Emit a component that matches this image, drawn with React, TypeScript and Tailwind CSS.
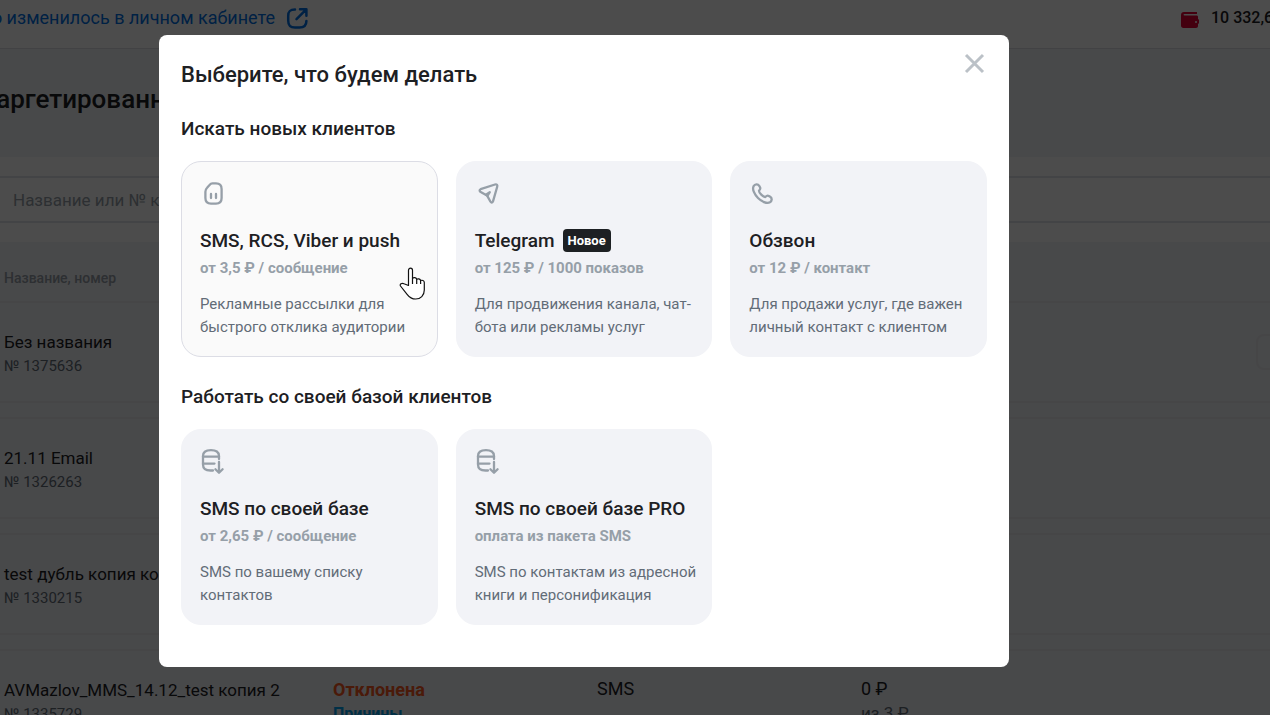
import type { ReactNode } from "react";

type Option = {
  icon: ReactNode;
  title: string;
  price: string;
  text: string;
  isNew?: boolean;
  active?: boolean;
};

type Campaign = {
  name: string;
  number: string;
  status?: string;
  channel?: string;
  spent?: string;
  budget?: string;
  menu?: boolean;
};

function CardIcon({ children }: { children: ReactNode }) {
  return (
    <svg
      width="27"
      height="27"
      viewBox="0 0 27 27"
      fill="none"
      stroke="#969fa8"
      strokeWidth="2.3"
      strokeLinecap="round"
      strokeLinejoin="round"
      aria-hidden="true"
    >
      {children}
    </svg>
  );
}

function SimIcon() {
  return (
    <CardIcon>
      <path d="M12.4 3.4h3.6c4 0 5.6 1.6 5.6 5.6v9c0 4-1.6 5.6-5.6 5.6h-5c-4 0-5.6-1.6-5.6-5.6v-6.2c0-1.8.5-2.9 1.7-4.1l2.2-2.4c1-1.2 1.7-1.9 3.1-1.9z" />
      <path d="M11 14v4M16 14v4" />
    </CardIcon>
  );
}

function TelegramIcon() {
  return (
    <CardIcon>
      <path d="M5.6 9.2 20 4.5c1.8-.5 2.7.4 2.2 2.2L18 21.4c-.5 1.4-1.7 1.5-2.5.3L12 15.4l-6.300-3.300c-1.400-.9-1.400-2.300-.1-2.900z" />
      <path d="m11 14.800 3.800-2.700-2.300 3.600z" />
    </CardIcon>
  );
}

function PhoneIcon() {
  return (
    <CardIcon>
      <path d="M4.6 6.2C6 3.9 8.9 3.7 10.2 5.8l.8 1.400c.8 1.400.1 2.400-1 3.500C9.800 12.700 14.200 17.200 16.300 17c1.100-1.100 2.100-1.800 3.500-1l1.400.8c2.100 1.400 1.900 4.200-.3 5.500C17.800 24 12.500 21.500 9 18 5.500 14.500 3 9.200 4.600 6.200Z" />
    </CardIcon>
  );
}

function BaseIcon() {
  return (
    <CardIcon>
      <path d="M19 11V8c0-4-3-5.900-8-5.900S3 4 3 8v8.500c0 4.200 2.500 6 7.500 6H13" />
      <path d="M3 8.700h16M3 15.600h11.500" />
      <path d="M19 14v10.500M15.400 21.200l3.600 3.600 3.600-3.600" />
    </CardIcon>
  );
}

function HandCursor() {
  return (
    <svg
      className="pointer-events-none absolute top-[105px] right-[11px]"
      width="27"
      height="33"
      viewBox="0 0 27 33"
      fill="#fff"
      stroke="#111"
      strokeWidth="1.2"
      strokeLinejoin="round"
      aria-hidden="true"
    >
      <path d="M9.500 18.500V3.200c0-2.800 4-2.800 4 0v8.300c1-1.500 4-1.200 4.200.9 1-1.100 3.600-.7 3.900 1.200 1.300-.8 3.700-.2 3.700 2V23c0 5.500-3.800 9-8.600 9-4.200 0-6.400-1.800-8.600-4.700L1.500 19c-1.200-2 1.500-3.500 3.500-2.200z" />
      <path d="M13.500 11.500V17M17.700 12.500V17M21.600 13.600V17" fill="none" />
    </svg>
  );
}

const searchOptions: Option[] = [
  {
    icon: <SimIcon />,
    title: "SMS, RCS, Viber и push",
    price: "от 3,5 ₽ / сообщение",
    text: "Рекламные рассылки для быстрого отклика аудитории",
    active: true,
  },
  {
    icon: <TelegramIcon />,
    title: "Telegram",
    price: "от 125 ₽ / 1000 показов",
    text: "Для продвижения канала, чат-бота или рекламы услуг",
    isNew: true,
  },
  {
    icon: <PhoneIcon />,
    title: "Обзвон",
    price: "от 12 ₽ / контакт",
    text: "Для продажи услуг, где важен личный контакт с клиентом",
  },
];

const baseOptions: Option[] = [
  {
    icon: <BaseIcon />,
    title: "SMS по своей базе",
    price: "от 2,65 ₽ / сообщение",
    text: "SMS по вашему списку контактов",
  },
  {
    icon: <BaseIcon />,
    title: "SMS по своей базе PRO",
    price: "оплата из пакета SMS",
    text: "SMS по контактам из адресной книги и персонификация",
  },
];

const campaigns: Campaign[] = [
  { name: "Без названия", number: "№ 1375636", menu: true },
  { name: "21.11 Email", number: "№ 1326263" },
  { name: "test дубль копия копия", number: "№ 1330215" },
  {
    name: "AVMazlov_MMS_14.12_test копия 2",
    number: "№ 1335729",
    status: "Отклонена",
    channel: "SMS",
    spent: "0 ₽",
    budget: "из 3 ₽",
  },
];

function OptionCard({ option }: { option: Option }) {
  return (
    <button
      type="button"
      className={
        option.active
          ? "relative flex flex-col items-start rounded-[20px] border border-[#dcdde5] bg-[#fafafa] pt-[18px] pr-3 pb-[17px] pl-[18px] text-left"
          : "relative flex flex-col items-start rounded-[20px] border border-[#f2f3f7] bg-[#f2f3f7] pt-[18px] pr-3 pb-[17px] pl-[18px] text-left"
      }
    >
      {option.icon}
      <span className="mt-5 flex items-center gap-2 text-[19px] leading-[27px] font-medium whitespace-nowrap text-[#1d2023]">
        {option.title}
        {option.isNew && (
          <span className="rounded bg-[#1d2023] px-[5px] text-[13px] leading-[23px] font-bold text-white">
            Новое
          </span>
        )}
      </span>
      <span className="mt-0.5 text-[15px] leading-6 font-bold whitespace-nowrap text-[#969fa8]">
        {option.price}
      </span>
      <span className="mt-[13px] text-[15px] leading-[23px] text-[#626c77]">
        {option.text}
      </span>
      {option.active && <HandCursor />}
    </button>
  );
}

function OptionGroup({ title, options }: { title: string; options: Option[] }) {
  return (
    <section>
      <h3 className="text-[19px] leading-7 font-medium text-[#1d2023]">
        {title}
      </h3>
      <div className="mt-[18px] grid grid-cols-3 gap-[18px]">
        {options.map((option) => (
          <OptionCard key={option.title} option={option} />
        ))}
      </div>
    </section>
  );
}

function TopBar() {
  return (
    <header className="flex h-[49px] items-start justify-between border-b border-[#dcdde5] bg-white">
      <a href="#news" className="flex pt-1 text-[#0070e5]">
        <span className="flex w-[275px] justify-end text-lg leading-7 whitespace-nowrap">
          Что изменилось в личном кабинете
        </span>
        <svg
          className="mt-[3px] ml-[11px]"
          width="23"
          height="23"
          viewBox="0 0 23 23"
          fill="none"
          stroke="currentColor"
          strokeWidth="2.5"
          strokeLinecap="round"
          strokeLinejoin="round"
          aria-hidden="true"
        >
          <path d="M9 2.500C4 2.500 2.200 4 2.200 9v4.500c0 5 1.800 7 6.800 7h4.500c5 0 6.900-2 6.900-6.500M14 2.300h6.400v6.400M20 2.700 10.500 12.200" />
        </svg>
      </a>
      <div className="flex w-[90px] shrink-0 items-center gap-3 overflow-hidden pt-1">
        <svg width="19" height="19" viewBox="0 0 19 19" className="mt-1 shrink-0" aria-hidden="true">
          <path
            fill="#e50033"
            d="M4 1h13v2H4.500c-1.300 0-1.300 1.500 0 1.500H16.500c1 0 1.500.5 1.500 1.500v2c.6.2 1 .6 1 1.300v2.400c0 .7-.4 1.100-1 1.300v2c0 1.200-.8 2-2 2H3.500c-1.600 0-2.500-1-2.500-2.500V4c0-2 1-3 3-3z"
          />
          <circle cx="16" cy="11" r="1" fill="#fff" />
        </svg>
        <span className="text-base leading-7 font-medium whitespace-nowrap text-[#1d2023]">
          10 332,60 ₽
        </span>
      </div>
    </header>
  );
}

function CampaignsTable() {
  return (
    <table className="w-full table-fixed border-separate border-spacing-x-0 border-spacing-y-[14px] bg-[#f2f3f7] text-left">
      <colgroup>
        <col className="w-[329px]" />
        <col className="w-[264px]" />
        <col className="w-[264px]" />
        <col />
      </colgroup>
      <thead>
        <tr>
          <th colSpan={4} className="h-[31px] pt-[13px] pl-1 text-sm leading-4 font-medium text-[#969fa8]">
            Название, номер
          </th>
        </tr>
      </thead>
      <tbody>
        {campaigns.map((item) => (
          <tr key={item.number} className="h-[102px] align-top">
            <td className="border-y-2 border-[#e9eaef] pt-[27px] pl-1 whitespace-nowrap">
              <div className="text-[17px] leading-6 text-[#1d2023]">{item.name}</div>
              <div className="text-[15px] leading-6 text-[#626c77]">{item.number}</div>
            </td>
            <td className="border-y-2 border-[#e9eaef] pt-[27px] pl-1">
              {item.status && (
                <>
                  <div className="text-lg leading-6 font-bold text-[#f95721]">{item.status}</div>
                  <a href="#reasons" className="text-base leading-6 font-bold text-[#00a0ee]">
                    Причины
                  </a>
                </>
              )}
            </td>
            <td className="border-y-2 border-[#e9eaef] pt-[26px] pl-1 text-lg leading-6 text-[#1d2023]">
              {item.channel}
            </td>
            <td className="border-y-2 border-[#e9eaef] pt-[26px] pl-1">
              {item.spent && (
                <>
                  <div className="text-lg leading-6 text-[#1d2023]">{item.spent}</div>
                  <div className="text-[17px] leading-6 text-[#626c77]">{item.budget}</div>
                </>
              )}
              {item.menu && (
                <button
                  type="button"
                  aria-label="Действия"
                  className="-mr-6 ml-auto mt-[5px] block h-9 w-[38px] rounded-lg border-2 border-[#e9eaef]"
                />
              )}
            </td>
          </tr>
        ))}
      </tbody>
    </table>
  );
}

function CreateModal() {
  return (
    <div className="fixed inset-0 flex items-start justify-center overflow-hidden bg-black/70 pt-[35px] pr-[102px]">
      <div
        role="dialog"
        aria-modal="true"
        aria-labelledby="modal-title"
        className="w-full max-w-[850px] rounded-lg bg-white px-[22px] pb-[42px]"
      >
        <div className="flex items-start justify-between">
          <h2 id="modal-title" className="pt-6 text-[22px] leading-8 font-medium text-[#1d2023]">
            Выберите, что будем делать
          </h2>
          <button type="button" aria-label="Закрыть" className="mt-[17px] p-px">
            <svg
              width="22"
              height="22"
              viewBox="0 0 22 22"
              stroke="#bbc1c7"
              strokeWidth="3"
              aria-hidden="true"
            >
              <path d="m2 2 17 17M19 2 2 19" />
            </svg>
          </button>
        </div>
        <div className="mt-6 flex flex-col gap-[26px]">
          <OptionGroup title="Искать новых клиентов" options={searchOptions} />
          <OptionGroup title="Работать со своей базой клиентов" options={baseOptions} />
        </div>
      </div>
    </div>
  );
}

export default function App() {
  return (
    <div className="h-screen overflow-hidden bg-white font-[Roboto,sans-serif]">
      <TopBar />
      <main>
        <div className="flex h-[108px] items-start bg-[#f2f3f7] pt-8">
          <h1 className="-ml-[18px] text-[26px] leading-9 font-medium text-[#1d2023]">
            Таргетированные
          </h1>
        </div>
        <div className="py-[19px]">
          <input
            type="search"
            aria-label="Поиск"
            placeholder="Название или № кампании"
            className="block h-[47px] w-full border-y-2 border-[#e2e5eb] pl-[13px] text-[17px] placeholder:text-[#969fa8]"
          />
        </div>
        <CampaignsTable />
      </main>
      <CreateModal />
    </div>
  );
}
